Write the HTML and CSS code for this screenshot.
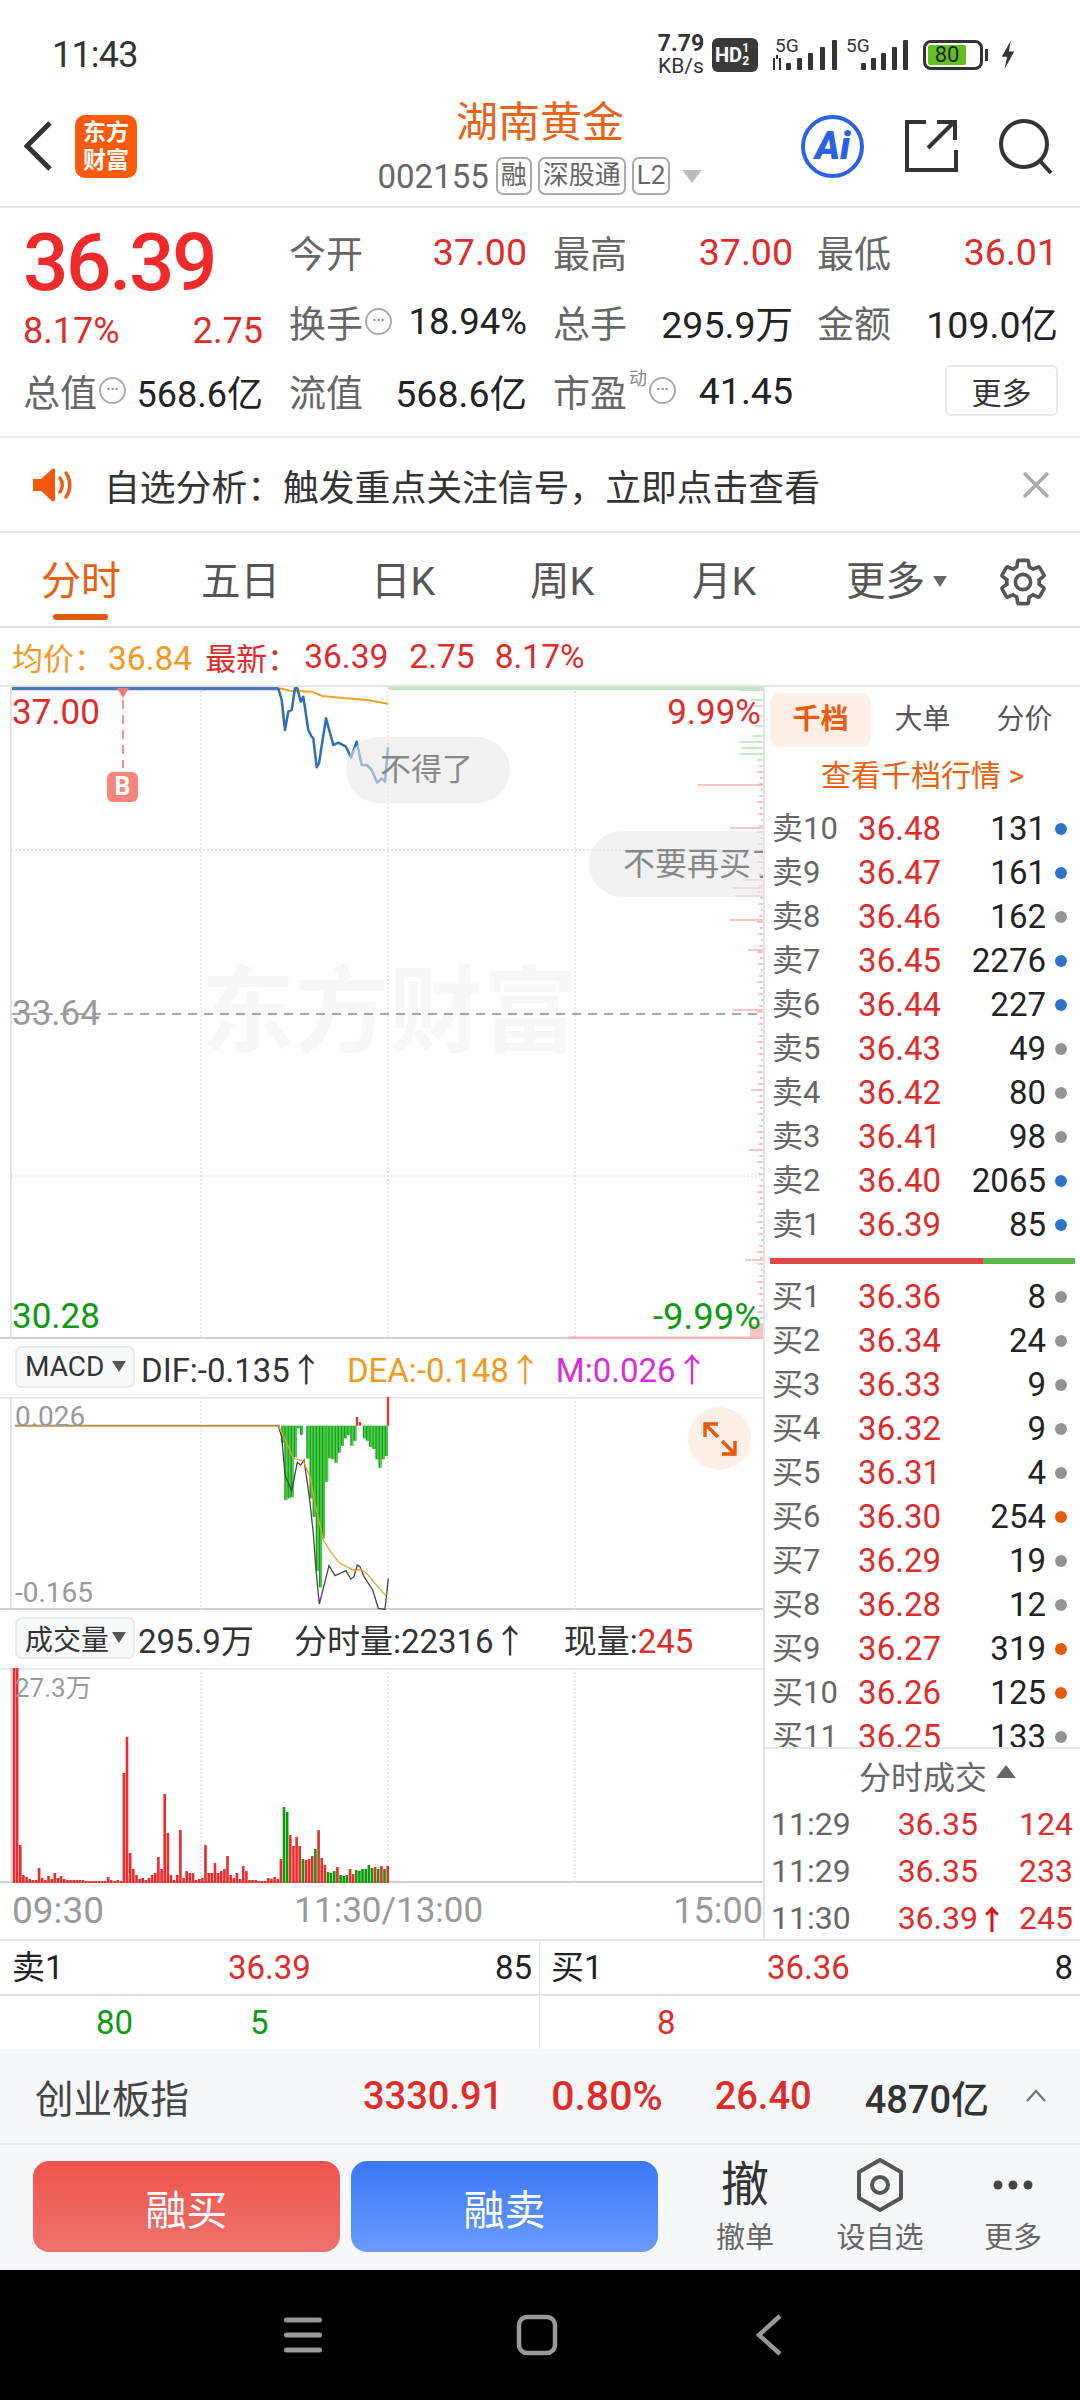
FILE: index.html
```html
<!DOCTYPE html>
<html>
<head>
	<title>湖南黄金</title>
	<link rel="stylesheet" href="styles.css">
</head>
<body>
<div class="phone">

	<div class="status-bar">
		<span class="clock">11:43</span>
		<div class="status-icons">
			<div class="speed"><b>7.79</b><span>KB/s</span></div>
			<div class="hd">HD<small>1<br>2</small></div>
			<div class="signal">
				<span>5G</span>
				<svg width="67" height="30" viewBox="0 0 67 30"><path d="M3 18v12M9 30V18M6 15v4" stroke="#333" stroke-width="2" fill="none"/><g fill="#333"><rect x="15" y="23" width="5" height="7" rx="1"/><rect x="26" y="18" width="5" height="12" rx="1"/><rect x="37" y="13" width="5" height="17" rx="1"/><rect x="49" y="7" width="5" height="23" rx="1"/><rect x="61" y="0" width="5" height="30" rx="1"/></g></svg>
			</div>
			<div class="signal second">
				<span>5G</span>
				<svg width="63" height="30" viewBox="0 0 63 30"><g fill="#333"><rect x="16" y="23" width="5" height="7" rx="1"/><rect x="26" y="18" width="5" height="12" rx="1"/><rect x="36" y="13" width="5" height="17" rx="1"/><rect x="47" y="7" width="5" height="23" rx="1"/><rect x="58" y="0" width="5" height="30" rx="1"/></g></svg>
			</div>
			<div class="battery"><div class="battery-fill">80</div></div>
			<div class="battery-tip"></div>
			<svg class="bolt" width="16" height="34" viewBox="0 0 18 34"><path d="M12 1 2 19h6l-3 14L16 13h-6z" fill="#333"/></svg>
		</div>
	</div>

	<div class="header">
		<div class="header-left">
			<svg width="30" height="52" viewBox="0 0 30 52"><path d="M26 3 3 26l23 23" fill="none" stroke="#333" stroke-width="5"/></svg>
			<div class="logo">东方<br>财富</div>
		</div>
		<div class="header-center">
			<div class="title">湖南黄金</div>
			<div class="code-row">
				<span class="code">002155</span>
				<span class="tag">融</span>
				<span class="tag">深股通</span>
				<span class="tag">L2</span>
				<span class="tri-down"></span>
			</div>
		</div>
		<div class="header-right">
			<div class="ai-btn">Ai</div>
			<svg width="54" height="56" viewBox="0 0 54 56"><path d="M22 4H3v48h49V32M24 30 50 4M33 4h18v18" fill="none" stroke="#333" stroke-width="4"/></svg>
			<svg width="56" height="58" viewBox="0 0 56 58"><circle cx="26" cy="27" r="23" fill="none" stroke="#333" stroke-width="4"/><path d="m42 44 11 12" stroke="#333" stroke-width="4"/></svg>
		</div>
	</div>

	<div class="quote">
		<div class="last-price">36.39</div>
		<div class="pair"><span class="lbl">今开</span><span class="red">37.00</span></div>
		<div class="pair"><span class="lbl">最高</span><span class="red">37.00</span></div>
		<div class="pair"><span class="lbl">最低</span><span class="red">36.01</span></div>

		<div class="pair change red"><span>8.17%</span><span>2.75</span></div>
		<div class="pair"><span class="lbl">换手<i class="more-dot">···</i></span><span class="tight">18.94%</span></div>
		<div class="pair"><span class="lbl">总手</span><span>295.9万</span></div>
		<div class="pair"><span class="lbl">金额</span><span>109.0亿</span></div>

		<div class="pair narrow"><span class="lbl">总值<i class="more-dot">···</i></span><span>568.6亿</span></div>
		<div class="pair"><span class="lbl">流值</span><span>568.6亿</span></div>
		<div class="pair"><span class="lbl">市盈<sup>动</sup><i class="more-dot">···</i></span><span>41.45</span></div>
		<div class="more-cell"><button class="more-btn">更多</button></div>
	</div>

	<div class="notice">
		<svg width="42" height="36" viewBox="0 0 42 36"><path d="M1 12h8L20 2c2-1 3 0 3 2v28c0 2-1 3-3 2L9 24H1z" fill="#f25a0a"/><path d="M28 11c3 4 3 10 0 14M34 6c5 7 5 17 0 24" fill="none" stroke="#f25a0a" stroke-width="3.5" stroke-linecap="round"/></svg>
		<span class="notice-text">自选分析：触发重点关注信号，立即点击查看</span>
		<svg class="notice-close" width="28" height="28" viewBox="0 0 28 28"><path d="m2 2 24 24M26 2 2 26" stroke="#aaa" stroke-width="3.5"/></svg>
	</div>

	<div class="tabs">
		<div class="tab active">分时</div>
		<div class="tab t2">五日</div>
		<div class="tab t3">日K</div>
		<div class="tab t4">周K</div>
		<div class="tab t5">月K</div>
		<div class="tab t6">更多<span class="tri-small"></span></div>
		<svg class="gear" width="54" height="54" viewBox="0 0 24 24"><path d="M19.14 12.94c.04-.3.06-.61.06-.94 0-.32-.02-.64-.07-.94l2.03-1.58c.18-.14.23-.41.12-.61l-1.92-3.32c-.12-.22-.37-.29-.59-.22l-2.39.96c-.5-.38-1.03-.7-1.62-.94l-.36-2.54c-.04-.24-.24-.41-.48-.41h-3.84c-.24 0-.43.17-.47.41l-.36 2.54c-.59.24-1.13.57-1.62.94l-2.39-.96c-.22-.08-.47 0-.59.22L2.74 8.87c-.12.21-.08.47.12.61l2.03 1.58c-.05.3-.09.63-.09.94s.02.64.07.94l-2.03 1.58c-.18.14-.23.41-.12.61l1.92 3.32c.12.22.37.29.59.22l2.39-.96c.5.38 1.03.7 1.62.94l.36 2.54c.05.24.24.41.48.41h3.84c.24 0 .44-.17.47-.41l.36-2.54c.59-.24 1.13-.56 1.62-.94l2.39.96c.22.08.47 0 .59-.22l1.92-3.32c.12-.22.07-.47-.12-.61l-2.01-1.58z" fill="none" stroke="#555" stroke-width="1.6"/><circle cx="12" cy="12" r="3.4" fill="none" stroke="#555" stroke-width="1.6"/></svg>
	</div>

	<div class="legend">
		<span class="orange">均价：<b class="num l1">36.84</b></span>
		<span class="red l2">最新：</span>
		<b class="num red l3">36.39</b>
		<b class="num red l4">2.75</b>
		<b class="num red l5">8.17%</b>
	</div>

	<div class="market">
		<div class="charts">
			<div class="price-chart">
				<div class="watermark">东方财富</div>
				<svg class="chart-svg" width="763" height="652" viewBox="0 687 763 652">
					<g stroke="#e2e2e2" stroke-width="1.5" stroke-dasharray="2 2">
						<path d="M201 687v652M388 687v652M575 687v652M11 850h752M11 1176h752"/>
					</g>
					<path d="M11 687v652" stroke="#d8d8d8" stroke-width="1.5"/>
					<path d="M12 1014h751" stroke="#888" stroke-width="1.5" stroke-dasharray="9 7"/>
					<path id="depth-red" stroke="#f3b4b4" stroke-width="1.5"/>
					<path id="depth-green" stroke="#b9dfb9" stroke-width="1.5"/>
					<path d="M388 688.500h375" stroke="#c8e2c8" stroke-width="3.5"/>
					<path d="M568 1338h195" stroke="#f3b4b4" stroke-width="3"/>
					<path d="M278 688 290 690.7 312 691.7 322 696 340 697.7 367 700 388 703.7" fill="none" stroke="#f0a030" stroke-width="2"/>
					<path d="M12 688.500h266" stroke="#4a78b8" stroke-width="3.5"/>
					<path d="M278.3 688.3 281.7 700 285 730 288.3 711.7 291.7 710 295 688.3 297.3 688.3 300.7 701.7 303.3 696.7 308.3 730 311.7 736.7 313.3 738.3 316.7 767.3 319 763.3 326 718.3 333.3 745 338.3 742.7 346 746.7 351 757.7 356.7 741.7 361.7 765 366.7 765 371.7 770 377.3 782.7 381.7 778.3 385 781.7 388 747.7" fill="none" stroke="#2f6db5" stroke-width="2.5" stroke-linejoin="round"/>
					<path d="M123 700v68" stroke="#f09090" stroke-width="2" stroke-dasharray="9 6"/>
					<path d="M117 688h12l-6 10z" fill="#f07878"/>
				</svg>
				<div class="axis-label red top-left">37.00</div>
				<div class="axis-label red top-right">9.99%</div>
				<div class="axis-label mid-left">33.64</div>
				<div class="axis-label green bottom-left">30.28</div>
				<div class="axis-label green bottom-right">-9.99%</div>
				<div class="buy-mark">B</div>
				<div class="bubble bubble-one">不得了</div>
				<div class="bubble bubble-two">不要再买了</div>
			</div>

			<div class="chart-head">
				<div class="select">MACD<span class="tri-select"></span></div>
				<span class="head-a">DIF:-0.135↑</span>
				<span class="orange head-b">DEA:-0.148↑</span>
				<span class="magenta head-c">M:0.026↑</span>
			</div>
			<div class="macd-chart">
				<svg class="chart-svg" width="763" height="213" viewBox="0 1397 763 213">
					<path d="M201 1397v213M388 1397v213M575 1397v213" stroke="#e2e2e2" stroke-width="1.5" stroke-dasharray="2 2"/>
					<path d="M11 1397v213" stroke="#d8d8d8" stroke-width="1.5"/>
					<path id="hist-dark" stroke="#12a012" stroke-width="3"/>
					<path id="hist-light" stroke="#4dcf4d" stroke-width="1.6"/>
					<path id="hist-red" stroke="#d83a3a" stroke-width="2.4"/>
					<path d="M15 1425.7h265" stroke="#b3914a" stroke-width="2"/>
					<path id="dif-line" fill="none" stroke="#444" stroke-width="1.3"/>
					<path id="dea-line" fill="none" stroke="#e8a030" stroke-width="1.3"/>
				</svg>
				<div class="small-label macd-top">0.026</div>
				<div class="small-label macd-bottom">-0.165</div>
				<div class="expand">
					<svg width="36" height="36" viewBox="0 0 36 36"><path d="M3 16V3h13M3 3l13 13M33 20v13H20M33 33 20 20" fill="none" stroke="#e8590c" stroke-width="3.4"/></svg>
				</div>
			</div>

			<div class="chart-head">
				<div class="select">成交量<span class="tri-select"></span></div>
				<span class="head-d">295.9万</span>
				<span class="head-e">分时量:22316↑</span>
				<span class="head-f">现量:<span class="red">245</span></span>
			</div>
			<div class="volume-chart">
				<svg class="chart-svg" width="763" height="215" viewBox="0 1668 763 215">
					<path d="M201 1668v215M388 1668v215M575 1668v215" stroke="#e2e2e2" stroke-width="1.5" stroke-dasharray="2 2"/>
					<path d="M11 1668v215" stroke="#d8d8d8" stroke-width="1.5"/>
					<path id="vol-red" stroke="#ee2a2a" stroke-width="2.6"/>
					<path id="vol-green" stroke="#0a9a0a" stroke-width="2.6"/>
				</svg>
				<div class="small-label vol-top">27.3万</div>
			</div>

			<div class="time-axis">
				<span class="time-start">09:30</span>
				<span>11:30/13:00</span>
				<span class="time-end">15:00</span>
			</div>
		</div>

		<div class="side">
			<div class="side-tabs">
				<div class="side-tab active">千档</div>
				<div class="side-tab">大单</div>
				<div class="side-tab">分价</div>
			</div>
			<div class="side-link">查看千档行情 &gt;</div>
			<div class="book">
				<div class="row"><span class="row-lbl">卖10</span><span class="red">36.48</span><span>131</span><i class="dot blue"></i></div>
				<div class="row"><span class="row-lbl">卖9</span><span class="red">36.47</span><span>161</span><i class="dot blue"></i></div>
				<div class="row"><span class="row-lbl">卖8</span><span class="red">36.46</span><span>162</span><i class="dot grey"></i></div>
				<div class="row"><span class="row-lbl">卖7</span><span class="red">36.45</span><span>2276</span><i class="dot blue"></i></div>
				<div class="row"><span class="row-lbl">卖6</span><span class="red">36.44</span><span>227</span><i class="dot blue"></i></div>
				<div class="row"><span class="row-lbl">卖5</span><span class="red">36.43</span><span>49</span><i class="dot grey"></i></div>
				<div class="row"><span class="row-lbl">卖4</span><span class="red">36.42</span><span>80</span><i class="dot grey"></i></div>
				<div class="row"><span class="row-lbl">卖3</span><span class="red">36.41</span><span>98</span><i class="dot grey"></i></div>
				<div class="row"><span class="row-lbl">卖2</span><span class="red">36.40</span><span>2065</span><i class="dot blue"></i></div>
				<div class="row"><span class="row-lbl">卖1</span><span class="red">36.39</span><span>85</span><i class="dot blue"></i></div>
				<div class="book-split"><div class="split-bar"></div></div>
				<div class="row"><span class="row-lbl">买1</span><span class="red">36.36</span><span>8</span><i class="dot grey"></i></div>
				<div class="row"><span class="row-lbl">买2</span><span class="red">36.34</span><span>24</span><i class="dot grey"></i></div>
				<div class="row"><span class="row-lbl">买3</span><span class="red">36.33</span><span>9</span><i class="dot grey"></i></div>
				<div class="row"><span class="row-lbl">买4</span><span class="red">36.32</span><span>9</span><i class="dot grey"></i></div>
				<div class="row"><span class="row-lbl">买5</span><span class="red">36.31</span><span>4</span><i class="dot grey"></i></div>
				<div class="row"><span class="row-lbl">买6</span><span class="red">36.30</span><span>254</span><i class="dot deep-orange"></i></div>
				<div class="row"><span class="row-lbl">买7</span><span class="red">36.29</span><span>19</span><i class="dot grey"></i></div>
				<div class="row"><span class="row-lbl">买8</span><span class="red">36.28</span><span>12</span><i class="dot grey"></i></div>
				<div class="row"><span class="row-lbl">买9</span><span class="red">36.27</span><span>319</span><i class="dot deep-orange"></i></div>
				<div class="row"><span class="row-lbl">买10</span><span class="red">36.26</span><span>125</span><i class="dot deep-orange"></i></div>
				<div class="row"><span class="row-lbl">买11</span><span class="red">36.25</span><span>133</span><i class="dot grey"></i></div>
			</div>
			<div class="ticks">
				<div class="ticks-title">分时成交<span class="tri-up"></span></div>
				<div class="tick"><span class="tick-time">11:29</span><span class="red">36.35</span><span></span><span class="red">124</span></div>
				<div class="tick"><span class="tick-time">11:29</span><span class="red">36.35</span><span></span><span class="red">233</span></div>
				<div class="tick"><span class="tick-time">11:30</span><span class="red">36.39</span><span class="tick-arrow">↑</span><span class="red">245</span></div>
			</div>
		</div>
	</div>

	<div class="level-rows">
		<div class="level-row">
			<div class="level-half left"><span>卖1</span><span class="red">36.39</span><span>85</span></div>
			<div class="level-half right"><span>买1</span><span class="red">36.36</span><span>8</span></div>
		</div>
		<div class="level-row">
			<div class="level-half left second"><span class="green">80</span><span class="green">5</span></div>
			<div class="level-half right second"><span class="red">8</span></div>
		</div>
	</div>

	<div class="index-bar">
		<span class="index-name">创业板指</span>
		<div class="index-values">
			<span class="red strong i1">3330.91</span>
			<span class="red strong i2">0.80%</span>
			<span class="red strong i3">26.40</span>
			<span class="strong i4">4870亿</span>
			<svg width="22" height="14" viewBox="0 0 22 14"><path d="M2 12 11 2l9 10" fill="none" stroke="#777" stroke-width="2.4"/></svg>
		</div>
	</div>

	<div class="actions">
		<button class="trade buy">融买</button>
		<button class="trade sell">融卖</button>
		<div class="action a1"><span class="action-glyph">撤</span><span>撤单</span></div>
		<div class="action a2">
			<svg width="50" height="54" viewBox="0 0 50 54"><path d="M25 2 46 14v26L25 52 4 40V14z" fill="none" stroke="#555" stroke-width="4" stroke-linejoin="round"/><circle cx="25" cy="27" r="8" fill="none" stroke="#555" stroke-width="4"/></svg>
			<span>设自选</span>
		</div>
		<div class="action a3">
			<svg width="50" height="54" viewBox="0 0 50 54"><g fill="#444"><circle cx="10" cy="27" r="4.5"/><circle cx="25" cy="27" r="4.5"/><circle cx="40" cy="27" r="4.5"/></g></svg>
			<span>更多</span>
		</div>
	</div>

	<div class="nav-bar">
		<svg width="38" height="38" viewBox="0 0 38 38"><path d="M2.500 4h33M2.500 19h33M2.500 34h33" stroke="#999" stroke-width="5" stroke-linecap="round"/></svg>
		<svg width="42" height="42" viewBox="0 0 42 42"><rect x="3" y="3" width="36" height="36" rx="8" fill="none" stroke="#999" stroke-width="4.500"/></svg>
		<svg class="nav-back" width="28" height="42" viewBox="0 0 28 42"><path d="M25 2 4 21l21 19" fill="none" stroke="#999" stroke-width="4.500"/></svg>
	</div>
</div>
<script src="chart.js"></script>
</body>
</html>
```

FILE: styles.css
```css
* {
	box-sizing: border-box;
}

body {
	margin: 0;
	background-color: #fff;
	font-family: Roboto, "Noto Sans CJK SC", sans-serif;
	color: #222;
}

.phone {
	position: relative;
	width: 1080px;
	height: 2400px;
	overflow: hidden;
	display: flex;
	flex-direction: column;
}

.red { color: #e02b2b; }
.green { color: #0d9a12; }
.orange { color: #f09a1f; }
.magenta { color: #d62ed6; }

/* status bar */
.status-bar {
	height: 90px;
	display: flex;
	align-items: center;
	justify-content: space-between;
	padding: 20px 64px 0 52px;
}

.clock {
	font-size: 36px;
	letter-spacing: -0.8px;
	color: #333;
}

.status-icons {
	display: flex;
	align-items: center;
}

.speed {
	display: flex;
	flex-direction: column;
	align-items: center;
	font-size: 21px;
	line-height: 22px;
	width: 50px;
	color: #333;
}

.speed b {
	font-size: 23px;
}

.hd {
	width: 46px;
	height: 34px;
	margin-left: 6px;
	background-color: #3a3a3a;
	border-radius: 6px;
	color: #fff;
	font-size: 20px;
	font-weight: bold;
	display: flex;
	align-items: center;
	padding-left: 3px;
}

.hd small {
	font-size: 12px;
	line-height: 13px;
}

.signal {
	position: relative;
	margin-left: 13px;
}

.signal svg {
	display: block;
}

.signal span {
	position: absolute;
	left: 4px;
	top: -5px;
	font-size: 19px;
	line-height: 22px;
	color: #333;
}

.signal.second {
	margin-left: 7px;
}

.signal.second span {
	left: 1px;
}

.battery {
	width: 60px;
	height: 30px;
	margin-left: 15px;
	border: 3px solid #333;
	border-radius: 8px;
	padding: 2px;
}

.battery-fill {
	width: 38px;
	height: 20px;
	background-color: #62c01e;
	border-radius: 2px;
	font-size: 22px;
	line-height: 20px;
	text-align: center;
	color: #222;
}

.battery-tip {
	width: 3px;
	height: 12px;
	margin-left: 2px;
	background-color: #333;
}

.bolt {
	margin-left: 12px;
}

/* header */
.header {
	height: 118px;
	display: grid;
	grid-template-columns: 1fr auto 1fr;
	border-bottom: 2px solid #e2e2e2;
}

.header-left {
	display: flex;
	align-items: center;
	gap: 21px;
	padding: 0 0 0 24px;
	height: 112px;
}

.logo {
	width: 62px;
	height: 63px;
	background-color: #fb5a0c;
	border-radius: 10px;
	color: #fff;
	font-size: 23px;
	font-weight: bold;
	line-height: 28px;
	text-align: center;
	padding-top: 4px;
}

.header-center {
	display: flex;
	flex-direction: column;
	align-items: center;
	padding-top: 3px;
}

.title {
	font-size: 42px;
	line-height: 60px;
	color: #e8641a;
}

.code-row {
	display: flex;
	align-items: center;
	gap: 6px;
	height: 38px;
	margin-top: 4px;
}

.code {
	font-size: 33px;
	color: #666;
	margin-right: 1px;
}

.tag {
	height: 38px;
	border: 2px solid #aaa;
	border-radius: 7px;
	padding: 0 3px;
	font-size: 26px;
	line-height: 32px;
	color: #666;
}

.tri-down {
	width: 0;
	height: 0;
	margin-left: 6px;
	border-left: 10px solid transparent;
	border-right: 10px solid transparent;
	border-top: 13px solid #bbb;
}

.header-right {
	display: flex;
	align-items: center;
	justify-content: flex-end;
	gap: 40px;
	height: 112px;
	padding-right: 26px;
}

.ai-btn {
	width: 63px;
	height: 63px;
	border: 4px solid #2a62e6;
	border-radius: 50%;
	color: #2a62e6;
	font-size: 38px;
	font-weight: 900;
	font-style: italic;
	line-height: 55px;
	text-align: center;
}

/* quote panel */
.quote {
	height: 230px;
	padding: 9px 0 10px 23px;
	display: grid;
	grid-template-columns: 240px repeat(3, 238px);
	grid-template-rows: 70px 69px 69px;
	column-gap: 26px;
	border-bottom: 2px solid #ececec;
	font-size: 37.5px;
}

.quote > :nth-child(4n+3) {
	margin-right: -2px;
}

.quote > :nth-child(4n) {
	margin-right: -3px;
}

.last-price {
	font-size: 80px;
	font-weight: 500;
	line-height: 92px;
	height: 70px;
	letter-spacing: -2.4px;
	color: #f02a2a;
}

.pair {
	display: flex;
	align-items: center;
	justify-content: space-between;
	white-space: nowrap;
}

.pair.change {
	align-items: flex-end;
	font-size: 36px;
	line-height: 50px;
	height: 69px;
}

.pair.narrow {
	font-size: 36px;
}

.tight {
	font-size: 36.5px;
}

.lbl {
	display: flex;
	align-items: center;
	font-size: 37px;
	color: #666;
}

.more-dot {
	width: 27px;
	height: 27px;
	margin-left: 2px;
	border: 2px solid #aaa;
	border-radius: 50%;
	font-style: normal;
	font-weight: bold;
	font-size: 14px;
	line-height: 21px;
	text-align: center;
	color: #888;
}

.lbl sup {
	font-size: 18px;
	line-height: 1;
	margin: -24px 0 0 2px;
	color: #888;
}

.more-cell {
	display: flex;
	justify-content: flex-end;
	align-items: center;
}

.more-btn {
	width: 113px;
	height: 51px;
	background-color: #fff;
	border: 2px solid #e8e8e8;
	border-radius: 6px;
	font-family: inherit;
	font-size: 30px;
	color: #333;
}

/* notice */
.notice {
	height: 95px;
	display: flex;
	align-items: center;
	padding: 0 30px 0 32px;
	border-bottom: 2px solid #e4e4e4;
}

.notice-text {
	margin-left: 30px;
	font-size: 35.8px;
	color: #333;
}

.notice-close {
	margin-left: auto;
}

/* tabs */
.tabs {
	position: relative;
	height: 95px;
	display: flex;
	align-items: center;
	border-bottom: 2px solid #e4e4e4;
	font-size: 39.5px;
	color: #555;
}

.tab {
	position: absolute;
	top: 24px;
	line-height: 50px;
	white-space: nowrap;
}

.tab.active {
	left: 41px;
	font-size: 40px;
	color: #e8610e;
}

.tab.active::after {
	content: "";
	display: block;
	width: 55px;
	height: 6px;
	margin: 7px 0 0 12px;
	background-color: #e05a0c;
	border-radius: 3px;
}

.t2 { left: 201px; }
.t3 { left: 371px; }
.t4 { left: 530px; }
.t5 { left: 692px; }
.t6 { left: 846px; }

.tri-small {
	display: inline-block;
	margin: 0 0 8px 8px;
	border-left: 7px solid transparent;
	border-right: 7px solid transparent;
	border-top: 11px solid #666;
}

.gear {
	position: absolute;
	left: 996px;
	top: 22px;
}

/* legend */
.legend {
	height: 59px;
	display: flex;
	align-items: center;
	padding-left: 12px;
	font-size: 31px;
	white-space: nowrap;
	border-bottom: 2px solid #e4e4e4;
}

.num {
	font-size: 33.5px;
	font-weight: normal;
}

.l1 { margin-left: 3px; }
.l2 { margin-left: 13px; }
.l3 { margin-left: 6px; }
.l4 { margin-left: 21px; }
.l5 { margin-left: 20px; }

/* main market area */
.market {
	height: 1252px;
	display: flex;
}

.charts {
	width: 763px;
	flex-shrink: 0;
	display: flex;
	flex-direction: column;
}

.chart-svg {
	position: absolute;
	left: 0;
	top: 0;
}

.price-chart {
	position: relative;
	height: 652px;
	overflow: hidden;
	box-shadow: inset 0 -2px 0 #cfcfcf;
}

.watermark {
	position: absolute;
	left: 201px;
	top: 268px;
	font-size: 94px;
	font-weight: bold;
	line-height: 116px;
	white-space: nowrap;
	color: #f7f7f7;
}

.axis-label {
	position: absolute;
	font-size: 35px;
	line-height: 44px;
	z-index: 2;
}

.top-left { left: 12px; top: 4px; }
.top-right { right: 2px; top: 4px; }
.mid-left { left: 12px; top: 305px; color: #999; }
.bottom-left { left: 12px; bottom: 0; }
.bottom-right { right: 2px; bottom: 0; font-size: 36.5px; }

.buy-mark {
	position: absolute;
	left: 107px;
	top: 85px;
	width: 31px;
	height: 30px;
	background-color: #f8857a;
	border-radius: 6px;
	color: #fff;
	font-size: 25px;
	font-weight: bold;
	line-height: 30px;
	text-align: center;
}

.bubble {
	position: absolute;
	height: 66px;
	border-radius: 33px;
	background-color: rgba(232, 232, 232, 0.6);
	color: #888;
	font-size: 31px;
	line-height: 66px;
	white-space: nowrap;
}

.bubble-one {
	left: 346px;
	top: 50px;
	padding: 0 37px 0 34px;
}

.bubble-two {
	left: 589px;
	top: 144px;
	padding: 0 34px;
	font-size: 32px;
}

.chart-head {
	height: 58px;
	display: flex;
	align-items: center;
	position: relative;
	font-size: 33px;
	white-space: nowrap;
	color: #333;
}

.select {
	width: 120px;
	height: 42px;
	margin: 0 0 3px 15px;
	display: flex;
	align-items: center;
	justify-content: space-between;
	padding: 0 7px 0 8px;
	background-color: #f7f8fa;
	border: 2px solid #e8e9ec;
	border-radius: 7px;
	font-size: 28px;
}

.tri-select {
	border-left: 7px solid transparent;
	border-right: 7px solid transparent;
	border-top: 11px solid #555;
}

.head-a { margin-left: 6px; }
.head-b { margin-left: 24px; }
.head-c { margin-left: 14px; }
.head-d { margin-left: 3px; }
.head-e { margin-left: 40px; }
.head-f { margin-left: 37px; }

.macd-chart {
	position: relative;
	height: 213px;
	box-shadow: inset 0 -2px 0 #cfcfcf, inset 0 1.5px 0 #e2e2e2;
}

.volume-chart {
	position: relative;
	height: 215px;
	box-shadow: inset 0 -2px 0 #cfcfcf, inset 0 1.5px 0 #e2e2e2;
}

.small-label {
	position: absolute;
	left: 15px;
	font-size: 28px;
	line-height: 34px;
	color: #999;
}

.macd-top { top: 3px; }
.macd-bottom { top: 179px; }
.vol-top { top: 3px; font-size: 26px; }

.expand {
	position: absolute;
	left: 688px;
	top: 10px;
	width: 63px;
	height: 63px;
	border-radius: 50%;
	background-color: #fdeee6;
	display: flex;
	align-items: center;
	justify-content: center;
}

.time-axis {
	height: 56px;
	display: flex;
	justify-content: space-between;
	align-items: center;
	padding: 0 0 0 12px;
	font-size: 35px;
	line-height: 56px;
	color: #999;
	white-space: nowrap;
}

.time-start {
	font-size: 37px;
}

.time-end {
	font-size: 36px;
}

/* order book */
.side {
	width: 317px;
	border-left: 2px solid #e4e4e4;
	display: flex;
	flex-direction: column;
}

.side-tabs {
	height: 63px;
	display: flex;
	padding: 6px 0 0 5px;
	font-size: 28px;
	color: #555;
}

.side-tab {
	width: 101px;
	height: 54px;
	line-height: 54px;
	text-align: center;
	margin-right: 1px;
}

.side-tab.active {
	background-color: #fdeee6;
	border-radius: 10px;
	font-weight: bold;
	color: #ec5a0c;
}

.side-link {
	height: 57px;
	padding-left: 56px;
	font-size: 30px;
	line-height: 52px;
	white-space: nowrap;
	color: #e8610e;
}

.book {
	height: 940px;
	overflow: hidden;
}

.row {
	height: 44px;
	display: grid;
	grid-template-columns: 70px 99px 105px 21px;
	align-items: center;
	padding-left: 7px;
	font-size: 33px;
	line-height: 44px;
	text-align: right;
	color: #222;
}

.row-lbl {
	font-size: 31px;
	text-align: left;
	white-space: nowrap;
	color: #666;
}

.dot {
	justify-self: end;
	width: 12px;
	height: 12px;
	border-radius: 50%;
}

.dot.blue { background-color: #2f73c8; }
.dot.grey { background-color: #939398; }
.dot.deep-orange { background-color: #e8590c; }

.book-split {
	height: 28px;
	padding: 11px 5px 0 5px;
}

.split-bar {
	height: 6px;
	background: linear-gradient(90deg, #e04848 0, #e04848 70%, #5cb84a 70%);
}

.ticks {
	height: 192px;
	border-top: 2px solid #e8e8e8;
}

.ticks-title {
	height: 51px;
	display: flex;
	align-items: center;
	justify-content: center;
	padding-left: 30px;
	font-size: 32px;
	color: #666;
}

.tri-up {
	margin-left: 9px;
	margin-bottom: 6px;
	border-left: 10px solid transparent;
	border-right: 10px solid transparent;
	border-bottom: 13px solid #666;
}

.tick {
	height: 47px;
	display: grid;
	grid-template-columns: 119px 88px 22px 73px;
	align-items: center;
	padding-left: 6px;
	font-size: 32px;
	text-align: right;
}

.tick-time {
	text-align: left;
	color: #666;
}

.tick-arrow {
	font-size: 28px;
	font-weight: bold;
	text-align: center;
	color: #d81010;
}

/* level rows */
.level-rows {
	border-top: 2px solid #e4e4e4;
}

.level-row {
	height: 55px;
	display: flex;
	border-bottom: 2px solid #e4e4e4;
	font-size: 33px;
}

.level-half {
	display: grid;
	align-items: center;
	white-space: nowrap;
	line-height: 53px;
}

.level-half.left {
	width: 540px;
	grid-template-columns: 216px 100px 204px;
	padding-left: 12px;
	border-right: 1px solid #e4e4e4;
}

.level-half.right {
	width: 540px;
	grid-template-columns: 216px 100px 206px;
	padding-left: 11px;
}

.level-half.left span:last-child,
.level-half.right span:last-child {
	text-align: right;
}

.level-half.left.second {
	grid-template-columns: 154px auto;
	padding-left: 96px;
}

.level-half.right.second {
	grid-template-columns: auto;
	padding-left: 117px;
}

.level-half.second span:last-child {
	text-align: left;
}

/* index bar */
.index-bar {
	height: 96px;
	display: flex;
	align-items: center;
	padding-left: 35px;
	background-color: #f6f7f9;
	border-bottom: 2px solid #e8e8e8;
	margin-top: -2px;
}

.index-name {
	font-size: 38.5px;
	color: #444;
}

.index-values {
	display: flex;
	align-items: center;
	font-size: 38px;
	white-space: nowrap;
}

.strong {
	font-weight: 500;
}

.i1 { margin-left: 174px; }
.i2 { margin-left: 48px; font-size: 41px; }
.i3 { margin-left: 52px; }
.i4 { margin-left: 53px; color: #333; }
.index-values svg { margin-left: 36px; }

/* actions */
.actions {
	height: 125px;
	display: flex;
	align-items: flex-start;
	padding: 16px 0 0 33px;
	background-color: #f6f7f9;
}

.trade {
	width: 307px;
	height: 91px;
	margin-right: 11px;
	border: none;
	border-radius: 16px;
	color: #fff;
	font-family: inherit;
	font-size: 41px;
}

.trade.buy {
	background: linear-gradient(180deg, #f2544e, #ec726c);
}

.trade.sell {
	background: linear-gradient(180deg, #3a78f5, #6a9bff);
}

.action {
	position: absolute;
	top: 2158px;
	width: 100px;
	display: flex;
	flex-direction: column;
	align-items: center;
	font-size: 29px;
	line-height: 36px;
	color: #666;
}

.action svg {
	height: 54px;
	margin-bottom: 8px;
}

.action-glyph {
	font-size: 48px;
	line-height: 54px;
	margin-bottom: 8px;
	color: #333;
}

.a1 { left: 695px; }
.a2 { left: 830px; }
.a3 { left: 963px; }

/* nav bar */
.nav-bar {
	flex: 1;
	background-color: #000;
	display: flex;
	align-items: center;
	padding-left: 284px;
	gap: 194px;
}

.nav-back {
	margin-left: 3px;
}
```

FILE: chart.js
```js
// volume bars, heights in px from the baseline
const volRed = {
	0: 215, 1: 215, 2: 38, 3: 8, 4: 6, 5: 4, 6: 3, 7: 3, 8: 15, 9: 5, 10: 3, 11: 7, 12: 4, 13: 10, 14: 5, 15: 7, 16: 4,
	17: 3, 18: 3, 19: 3, 20: 3, 21: 3, 22: 3, 23: 2, 24: 2, 25: 2, 26: 2, 27: 2, 28: 2, 29: 2, 30: 6, 31: 3, 32: 2, 33: 3, 34: 2,
	35: 110, 36: 146, 37: 30, 38: 14, 39: 8, 40: 4, 41: 5, 42: 3, 43: 5, 44: 8, 45: 10, 46: 26, 47: 14, 48: 89, 49: 50, 50: 8,
	51: 3, 52: 8, 53: 53, 54: 5, 55: 12, 56: 10, 57: 10, 58: 3, 59: 4, 60: 5, 61: 38, 62: 10, 63: 10, 64: 20, 65: 10, 66: 12,
	67: 14, 68: 27, 69: 8, 70: 5, 71: 10, 72: 4, 73: 17, 74: 12, 75: 3, 76: 3, 77: 3, 78: 2, 79: 2, 80: 2, 81: 5, 82: 4, 83: 6, 84: 4,
	85: 24, 88: 48, 89: 37, 90: 46, 91: 37, 93: 23, 94: 24, 95: 27, 97: 53, 98: 25, 99: 18, 103: 16, 107: 14, 108: 9, 115: 16, 117: 17, 119: 17
};
const volGreen = {
	86: 76, 87: 71, 92: 24, 96: 34, 100: 11, 101: 10, 102: 12, 104: 8, 105: 7, 106: 8, 109: 13, 110: 12, 111: 14, 112: 14, 113: 18, 114: 15, 116: 14, 118: 14
};

function barsPath(data, base) {
	return Object.keys(data).map(i => `M${(14 + 3.14 * i).toFixed(1)} ${base}v-${data[i]}`).join('');
}

document.querySelector('#vol-red').setAttribute('d', barsPath(volRed, 1883));
document.querySelector('#vol-green').setAttribute('d', barsPath(volGreen, 1883));

// macd histogram, bottoms read off the chart
const histBottoms = [128, 300, 295, 292, 172, 85, 105, 0, 175, 295, 350, 512, 562, 415, 245, 175, 178, 188, 158, 137, 115, 105, 137, 122, 0, 0, 115, 122, 140, 147, 178, 203, 178, 168];
let dark = '';
let light = '';
histBottoms.forEach((b, i) => {
	if (!b) return;
	const x = 282.7 + 3.14 * i;
	const y = 1400 + b / 3;
	dark += `M${x.toFixed(1)} 1425.7V${y.toFixed(1)}`;
	light += `M${(x + 0.6).toFixed(1)} 1425.7V${y.toFixed(1)}`;
});
document.querySelector('#hist-dark').setAttribute('d', dark);
document.querySelector('#hist-light').setAttribute('d', light);
document.querySelector('#hist-red').setAttribute('d', 'M357 1425.7V1417M360 1425.7V1422M388 1425.7V1397');

function linePath(points) {
	return 'M' + points.map(p => `${(260 + p[0] / 3).toFixed(1)} ${(1400 + p[1] / 3).toFixed(1)}`).join(' ');
}

document.querySelector('#dif-line').setAttribute('d', linePath([[55, 77], [65, 110], [75, 225], [95, 272], [112, 187], [122, 195], [132, 180], [148, 290], [160, 400], [168, 510], [178, 612], [190, 565], [207, 497], [225, 527], [258, 512], [272, 537], [282, 530], [292, 495], [300, 500], [312, 530], [338, 570], [355, 625], [375, 628], [385, 535]]));
document.querySelector('#dea-line').setAttribute('d', linePath([[55, 77], [72, 110], [85, 140], [100, 175], [130, 183], [150, 230], [165, 310], [190, 420], [215, 460], [240, 490], [270, 505], [285, 512], [300, 508], [320, 520], [345, 550], [375, 585], [385, 578]]));

// depth ticks along the right edge of the price chart
const longTicks = { 785: 65, 828: 33, 880: 20, 888: 30, 896: 28, 920: 33, 950: 15, 1010: 30, 1090: 12, 1150: 14, 1260: 18 };
let redTicks = '';
for (let y = 766; y < 1336; y += 6) {
	redTicks += `M763 ${y}h-${2 + (y * 7) % 5}`;
}
Object.keys(longTicks).forEach(y => {
	redTicks += `M763 ${y}h-${longTicks[y]}`;
});
for (let y = 1325; y < 1338; y += 2) {
	redTicks += `M763 ${y}h-13`;
}
document.querySelector('#depth-red').setAttribute('d', redTicks);
document.querySelector('#depth-green').setAttribute('d', 'M763 690h-24M763 700h-12M763 706h-12M763 716h-6M763 726h-8M763 736h-10M763 742h-24M763 748h-22M763 754h-24M763 760h-6');
```
